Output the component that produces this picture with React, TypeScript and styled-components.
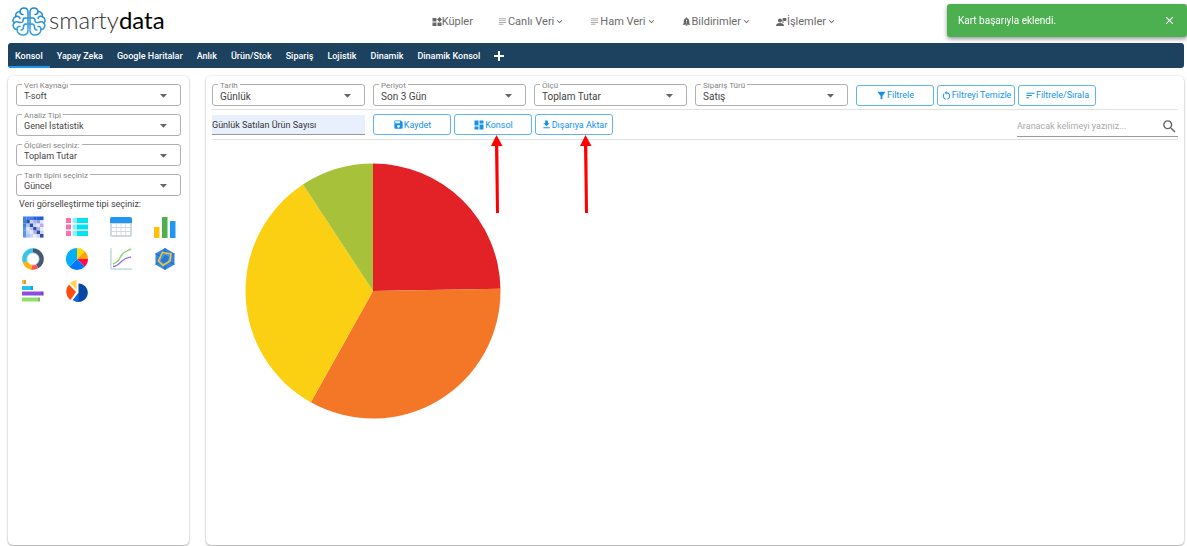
import React from 'react';
import styled, { createGlobalStyle } from 'styled-components';
import {
  MdArrowDropDown, MdClose, MdDashboard, MdDownload, MdFilterAlt, MdKeyboardArrowDown,
  MdNotificationImportant, MdRestartAlt, MdSave, MdSearch, MdSort, MdSubject,
} from 'react-icons/md';

const GlobalStyle = createGlobalStyle`
  *, *::before, *::after { box-sizing: border-box; }
  body { margin: 0; background: #fff; color: #555; font-family: Roboto, "Liberation Sans", sans-serif; font-size: 9px; }
  button, input, select { font-family: inherit; font-size: inherit; }
`;

const Page = styled.div`
  display: flex;
  flex-direction: column;
  min-height: 100vh;
  padding: 0 3px 1px 8px;
`;

const Header = styled.header`
  display: flex;
  align-items: center;
  height: 43px;
  padding: 0 80px 0 4px;
`;

const Logo = styled.a`
  display: flex;
  align-items: center;
  gap: 3px;
  color: #333;
  text-decoration: none;
`;

const Wordmark = styled.span`
  padding-bottom: 4px;
  font-family: Lato, sans-serif;
  font-size: 24px;
  font-weight: 300;
  line-height: 28px;
  b { font-weight: 400; color: #000; }
`;

const Menu = styled.nav`
  display: flex;
  flex: 1;
  justify-content: center;
  gap: 24px;
`;

const MenuButton = styled.button<{ $pale?: boolean }>`
  display: flex;
  align-items: center;
  padding: 0;
  border: 0;
  background: none;
  color: #6a6a6a;
  font-size: 11px;
  line-height: 14px;
  white-space: nowrap;
  svg:first-child { color: ${p => (p.$pale ? '#aaa' : '#666')}; }
`;

const TabBar = styled.nav`
  display: flex;
  align-items: stretch;
  height: 25px;
  border-radius: 3px;
  background: #1d425f;
  overflow: hidden;
`;

const Tab = styled.a<{ $active?: boolean }>`
  display: flex;
  align-items: center;
  padding: 2px 7px 0;
  border-bottom: 2px solid ${p => (p.$active ? '#2196f3' : 'transparent')};
  color: #fff;
  font-weight: 500;
  text-decoration: none;
  white-space: nowrap;
`;

const AddTab = styled.button`
  display: flex;
  align-items: center;
  padding: 0 7px;
  border: 0;
  background: none;
  color: #fff;
`;

const Main = styled.main`
  display: flex;
  flex: 1;
  gap: 17px;
  margin-top: 8px;
`;

const Panel = styled.section`
  border-radius: 5px;
  background: #fff;
  box-shadow: 0 1px 2px rgba(0, 0, 0, 0.3), 0 0 3px rgba(0, 0, 0, 0.1);
`;

const Sidebar = styled(Panel)`
  flex: 0 0 181px;
  padding: 8px;
`;

const Content = styled(Panel)`
  flex: 1;
  min-width: 0;
  padding: 8px 6px;
`;

const FieldStack = styled.div`
  display: flex;
  flex-direction: column;
  gap: 8px;
`;

const FieldBox = styled.div`
  position: relative;
  height: 22px;
  border: 1px solid #b0b0b0;
  border-radius: 3px;
  > svg { position: absolute; right: 8px; top: 2px; color: #666; pointer-events: none; }
`;

const FieldLabel = styled.label`
  position: absolute;
  top: -3px;
  left: 5px;
  padding: 0 2px;
  background: #fff;
  color: #858585;
  font-size: 8px;
  line-height: 8px;
`;

const FieldSelect = styled.select<{ $large?: boolean }>`
  display: block;
  width: 100%;
  height: 20px;
  padding: ${p => (p.$large ? '2px' : '1px')} 24px 0 7px;
  border: 0;
  appearance: none;
  background: transparent;
  color: #444;
  font-size: ${p => (p.$large ? '10px' : '9px')};
`;

const ChartHeading = styled.h2`
  margin: 2px 3px 0;
  color: #444;
  font-size: 9px;
  font-weight: 400;
  line-height: 12px;
`;

const ChartGrid = styled.div`
  display: grid;
  grid-template-columns: repeat(4, 22px);
  gap: 10px 22px;
  margin: 6px 0 0 6px;
`;

const ChartButton = styled.button`
  padding: 0;
  border: 0;
  background: none;
  svg { display: block; }
`;

const FilterRow = styled.form`
  display: grid;
  grid-template-columns: repeat(6, 1fr);
  align-items: center;
  height: 26px;
  padding-bottom: 3px;
  border-bottom: 1px solid #e2e2e2;
  > ${FieldBox} { margin-right: 8px; }
`;

const ActionRow = styled(FilterRow)`
  height: 30px;
  padding: 0;
`;

const ButtonGroup = styled.div`
  display: flex;
  grid-column: span 2;
  gap: 3px;
`;

const ActionGroup = styled(ButtonGroup)`
  grid-column: span 4;
`;

const OutlineButton = styled.button`
  position: relative;
  display: flex;
  align-items: center;
  justify-content: center;
  flex: 0 0 78px;
  height: 21px;
  padding: 0;
  border: 1px solid #5db5f5;
  border-radius: 3px;
  background: #fff;
  color: #1292ee;
  white-space: nowrap;
`;

const NameInput = styled.input`
  height: 20px;
  margin-right: 8px;
  padding: 2px 0 0;
  border: 0;
  border-bottom: 1px solid #999;
  border-radius: 0;
  background: #e8effd;
  color: #333;
`;

const SearchBox = styled.div`
  display: flex;
  align-items: center;
  align-self: end;
  height: 20px;
  margin-bottom: 2px;
  border-bottom: 1px solid #999;
  svg { flex: none; color: #666; }
  input { flex: 1; min-width: 0; padding: 0 0 2px; border: 0; background: none; outline: 0; }
  input::placeholder { color: #aaa; opacity: 1; }
`;

const PieArea = styled.div`
  padding: 23px 33px;
  svg { display: block; }
`;

const Arrow = styled.svg<{ $left: number }>`
  position: absolute;
  top: 20px;
  left: ${p => p.$left}px;
  z-index: 1;
  pointer-events: none;
`;

const Toast = styled.div`
  position: fixed;
  top: 4px;
  right: 0;
  display: flex;
  align-items: center;
  justify-content: space-between;
  width: 240px;
  height: 33px;
  padding: 0 11px;
  border-radius: 3px;
  background: #4caf50;
  box-shadow: 0 2px 4px rgba(0, 0, 0, 0.4);
  color: #fff;
  font-size: 10px;
  button { display: flex; padding: 0; border: 0; background: none; color: #fff; }
`;

function Field({ id, label, value, large }: { id: string; label: string; value: string; large?: boolean }) {
  return (
    <FieldBox>
      <FieldSelect id={id} $large={large} defaultValue={value}><option>{value}</option></FieldSelect>
      <FieldLabel htmlFor={id}>{label}</FieldLabel>
      <MdArrowDropDown size={17} />
    </FieldBox>
  );
}

function CubesIcon() {
  return (
    <svg width="10" height="10" viewBox="0 0 20 20" fill="currentColor" aria-hidden="true">
      <path d="M1 2H9V9H1ZM1 11H9V18H1ZM11 11H19V18H11ZM15 0L20 5L15 10L10 5Z" />
    </svg>
  );
}

function OperationsIcon() {
  return (
    <svg width="11" height="10" viewBox="0 0 22 20" fill="currentColor" aria-hidden="true">
      <circle cx="8" cy="7" r="4" />
      <path d="M0 18Q0 12 8 12T16 18Z" />
      <path d="M14 12V3H20V7H15M14 5H20" fill="none" stroke="currentColor" strokeWidth="2" />
    </svg>
  );
}

function PlusIcon() {
  return (
    <svg width="10" height="10" viewBox="0 0 10 10" stroke="currentColor" strokeWidth="2" aria-hidden="true">
      <path d="M5 0V10M0 5H10" />
    </svg>
  );
}

function Brain() {
  const half = (
    <g>
      <path d="M16 22V5C16 2 14 1 12 1Q8.500 1 8 4.500C5 4.500 3 7 4 9.500C1 10.500 0 14 2 16C0 19 2 22.500 5 22.500C5 26 8 28 11 28Q16 28 16 23" />
      <path d="M8 4.500Q8 7.500 11 7.500M4 9.500Q7 8.500 8 11.500M2 16Q4 14 7.500 15.500M16 11H13Q11 11 11 13.500T8 15.500M5 22.500Q5 19 8 19.500M16 17H14Q11.500 17 11.500 20T9 23" />
    </g>
  );
  return (
    <svg width="34" height="29" viewBox="0 0 34 29" fill="none" stroke="url(#brainBlue)" strokeWidth="1.500" strokeLinecap="round" aria-hidden="true">
      <defs>
        <linearGradient id="brainBlue" gradientUnits="userSpaceOnUse" x1="0" y1="0" x2="0" y2="29">
          <stop stopColor="#1b87d8" />
          <stop offset="1" stopColor="#35a3dc" />
        </linearGradient>
      </defs>
      {half}
      <g transform="matrix(-1 0 0 1 34 0)">{half}</g>
    </svg>
  );
}

/* Slice of a disc between two clockwise angles measured from twelve o'clock. */
function slice(cx: number, cy: number, r: number, from: number, to: number) {
  const pt = (a: number) => {
    const t = (a * Math.PI) / 180;
    return `${(cx + r * Math.sin(t)).toFixed(2)} ${(cy - r * Math.cos(t)).toFixed(2)}`;
  };
  return `M${cx} ${cy}L${pt(from)}A${r} ${r} 0 ${to - from > 180 ? 1 : 0} 1 ${pt(to)}Z`;
}

const heat = [
  '#3f7fe8', '#3f7fe8', '#3f7fe8', '#2563d9', '#2563d9', '#1f5bd6',
  '#3f7fe8', '#2f4f9c', '#c9d2f5', '#b3aef0', '#8f9de8', '#dfe3fb',
  '#3f7fe8', '#a9c4f7', '#2f4f9c', '#c9d2f5', '#dfe3fb', '#b3aef0',
  '#5a96f0', '#dfe3fb', '#a9c4f7', '#2f4f9c', '#b3aef0', '#e8ebfd',
  '#5a96f0', '#c9d2f5', '#e8ebfd', '#b3aef0', '#2f4f9c', '#c9d2f5',
  '#5a96f0', '#a9c4f7', '#c9d2f5', '#e8ebfd', '#c9d2f5', '#2f4f9c',
];

const charts: { name: string; art: React.ReactNode }[] = [
  { name: 'Isı haritası', art: heat.map((c, i) => <rect key={i} x={1 + (i % 6) * 3.4} y={0.5 + Math.floor(i / 6) * 3.5} width="3.500" height="3.600" fill={c} />) },
  { name: 'Liste', art: [2, 8.5, 15].map(y => <g key={y}><rect y={y} width="5" height="5" fill="#ff6fae" /><rect x="6.500" y={y} width="5" height="5" fill="#8af0f5" /><rect x="11" y={y} width="11" height="5" fill="#00e3f2" /></g>) },
  { name: 'Tablo', art: <><rect width="22" height="20" y="1" rx="2" fill="#cfd8dc" /><path d="M0 7V3Q0 1 2 1H20Q22 1 22 3V7Z" fill="#2196f3" />{[8, 12, 16].map(y => [2, 6.7, 11.4, 16.1].map(x => <rect key={`${x}-${y}`} x={x} y={y} width="3.900" height="3" fill="#fff" />))}</> },
  { name: 'Sütun', art: <><rect y="11" width="5.500" height="11" fill="#ffc107" /><rect x="8" y="1" width="5.500" height="21" fill="#4caf50" /><rect x="16" y="5" width="5.500" height="17" fill="#2196f3" /></> },
  { name: 'Halka', art: <><path d={slice(11, 11, 10.8, 0, 150)} fill="#455a72" /><path d={slice(11, 11, 10.8, 150, 190)} fill="#ff5252" /><path d={slice(11, 11, 10.8, 190, 250)} fill="#ffb300" /><path d={slice(11, 11, 10.8, 250, 360)} fill="#35c4e8" /><circle cx="11" cy="11" r="6" fill="#fff" stroke="#d5dde0" /></> },
  { name: 'Pasta', art: <><path d={slice(11, 11, 11, 0, 45)} fill="#ffda00" /><path d={slice(11, 11, 11, 45, 90)} fill="#ff9f00" /><path d={slice(11, 11, 11, 90, 135)} fill="#ff0a4a" /><path d={slice(11, 11, 11, 135, 225)} fill="#0077ff" /><path d={slice(11, 11, 11, 225, 360)} fill="#00b0ff" /></> },
  { name: 'Çizgi', art: <g fill="none"><path d="M1 0V21H22" stroke="#a9cbd6" /><path d="M0 4H1M0 8H1M0 12H1M0 16H1M5 21V22M10 21V22M15 21V22" stroke="#a9cbd6" /><path d="M3 16C8 14 9 12 11 8S17 3 21 1" stroke="#86d96a" strokeWidth="1.400" /><path d="M3 18.500C8 18 9 16 12 13S17 10 21 9" stroke="#a070e8" strokeWidth="1.400" /></g> },
  { name: 'Radar', art: <><path d="M11 0L20.500 5.500V16.500L11 22L1.500 16.500V5.500Z" fill="#2f86e6" /><path d="M11 0V22M1.500 5.500L20.500 16.500M20.500 5.500L1.500 16.500" stroke="#1d5fc0" strokeWidth=".8" /><path d="M11 6L16 8.500L14 14L9 16L6 12Z" fill="#2a78d6" stroke="#5fb0ff" strokeWidth=".8" /><path d="M8.500 4.500L17 6L16 13L9 17.500L4.500 13Z" fill="none" stroke="#f0c52e" strokeWidth="1.700" /></> },
  { name: 'Çubuk', art: <><rect width="4" height="4" fill="#ffb84d" /><rect y="6" width="11" height="4" fill="#1fc4f4" /><rect y="11.500" width="21.500" height="4" fill="#8b4fe0" /><rect y="17.500" width="18" height="4" fill="#90e070" /><path d="M3 0V4M10 6V10M20.500 11.500V15.500M17 17.500V21.500" stroke="#000" strokeOpacity=".15" strokeWidth="2" /></> },
  { name: 'Ayrık pasta', art: <><path d="M12.500 3.500A9.200 9.200 0 1 1 7 20L12.500 13Z" fill="#0747a6" /><path d="M12.500 13L7 20Q9.500 22 13 22Z" fill="#0a66e0" /><path d="M10 12L3 4.500A10.500 10.500 0 0 0 4.500 20Z" fill="#ff4d0d" /><path d="M10.500 9.500V0Q6.500 .5 4 3Z" fill="#ffd54a" /></> },
];

const tabs = ['Konsol', 'Yapay Zeka', 'Google Haritalar', 'Anlık', 'Ürün/Stok', 'Sipariş', 'Lojistik', 'Dinamik', 'Dinamik Konsol'];

const slices = [
  { color: '#e32227', from: 0, to: 89 },
  { color: '#f47727', from: 89, to: 209.2 },
  { color: '#fbd012', from: 209.2, to: 326.7 },
  { color: '#a8c13a', from: 326.7, to: 360 },
];

function PointerArrow({ left }: { left: number }) {
  return (
    <Arrow $left={left} width="12" height="80" viewBox="0 0 12 80" aria-hidden="true">
      <path d="M5.500 0L11.500 11H7.300L8 78H5L4 11H0Z" fill="#f00" />
    </Arrow>
  );
}

export default function App() {
  return (
    <>
      <GlobalStyle />
      <Page>
        <Header>
          <Logo href="#"><Brain /><Wordmark>smarty<b>data</b></Wordmark></Logo>
          <Menu>
            <MenuButton><CubesIcon />Küpler</MenuButton>
            <MenuButton $pale><MdSubject size={11} />Canlı Veri<MdKeyboardArrowDown size={11} /></MenuButton>
            <MenuButton $pale><MdSubject size={11} />Ham Veri<MdKeyboardArrowDown size={11} /></MenuButton>
            <MenuButton><MdNotificationImportant size={11} />Bildirimler<MdKeyboardArrowDown size={11} /></MenuButton>
            <MenuButton><OperationsIcon />İşlemler<MdKeyboardArrowDown size={11} /></MenuButton>
          </Menu>
        </Header>
        <TabBar>
          {tabs.map((t, i) => <Tab key={t} href="#" $active={i === 0}>{t}</Tab>)}
          <AddTab aria-label="Sekme ekle"><PlusIcon /></AddTab>
        </TabBar>
        <Main>
          <Sidebar as="aside">
            <FieldStack>
              <Field id="source" label="Veri Kaynağı" value="T-soft" />
              <Field id="analysis" label="Analiz Tipi" value="Genel İstatistik" />
              <Field id="measures" label="Ölçüleri seçiniz:" value="Toplam Tutar" />
              <Field id="dateType" label="Tarih tipini seçiniz" value="Güncel" />
            </FieldStack>
            <ChartHeading>Veri görselleştirme tipi seçiniz:</ChartHeading>
            <ChartGrid>
              {charts.map(c => (
                <ChartButton key={c.name} aria-label={c.name}>
                  <svg width="22" height="22" viewBox="0 0 22 22">{c.art}</svg>
                </ChartButton>
              ))}
            </ChartGrid>
          </Sidebar>
          <Content>
            <FilterRow>
              <Field id="date" label="Tarih" value="Günlük" large />
              <Field id="period" label="Periyot" value="Son 3 Gün" large />
              <Field id="measure" label="Ölçü" value="Toplam Tutar" large />
              <Field id="orderType" label="Sipariş Türü" value="Satış" large />
              <ButtonGroup>
                <OutlineButton type="button"><MdFilterAlt size={11} />Filtrele</OutlineButton>
                <OutlineButton type="button"><MdRestartAlt size={11} />Filtreyi Temizle</OutlineButton>
                <OutlineButton type="button"><MdSort size={11} />Filtrele/Sırala</OutlineButton>
              </ButtonGroup>
            </FilterRow>
            <ActionRow>
              <NameInput aria-label="Kart adı" defaultValue="Günlük Satılan Ürün Sayısı" />
              <ActionGroup>
                <OutlineButton type="button"><MdSave size={11} />Kaydet</OutlineButton>
                <OutlineButton type="button"><MdDashboard size={12} />Konsol<PointerArrow left={36} /></OutlineButton>
                <OutlineButton type="button"><MdDownload size={11} />Dışarıya Aktar<PointerArrow left={44} /></OutlineButton>
              </ActionGroup>
              <SearchBox>
                <input type="text" aria-label="Arama" placeholder="Aranacak kelimeyi yazınız..." />
                <MdSearch size={17} />
              </SearchBox>
            </ActionRow>
            <PieArea>
              <svg width="256" height="256" viewBox="0 0 256 256" role="img" aria-label="Günlük satılan ürün sayısı">
                {slices.map(s => <path key={s.color} d={slice(128, 128, 127.5, s.from, s.to)} fill={s.color} />)}
              </svg>
            </PieArea>
          </Content>
        </Main>
      </Page>
      <Toast role="status">Kart başarıyla eklendi.<button aria-label="Kapat"><MdClose size={13} /></button></Toast>
    </>
  );
}
